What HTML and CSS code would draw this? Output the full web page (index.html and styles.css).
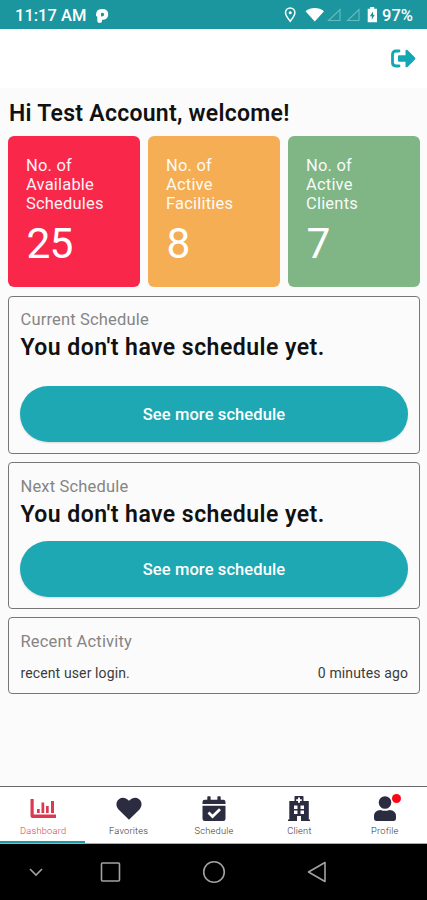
FILE: index.html
```html
<!DOCTYPE html>
<html lang="en">
<head>
<meta charset="utf-8">
<meta name="viewport" content="width=device-width, initial-scale=1">
<title>Dashboard</title>
<link rel="stylesheet" href="styles.css">
</head>
<body>
<div class="status">
  <span class="time">11:17 AM</span>
  <svg class="p-icon" width="14" height="16" viewBox="0 0 14 16"><path fill="#fff" fill-rule="evenodd" d="M4 1.500C9 0 13.200 1.800 13.200 6.300c0 4-3 5.700-6.200 5.500v1.400q0 1.800-2.300 1.800T2.300 13.200V8.500Q1 8.500 1 7C1.200 4 2 2.200 4 1.500zM6 5v3.500q3.200.3 3.200-2T6 5z"/></svg>
  <svg class="indicators" width="94" height="18" viewBox="0 0 94 18">
    <path fill="none" stroke="#fff" stroke-width="1.500" d="M6.200 14.200C3.500 10.800 1.500 8.500 1.500 5.700a4.700 4.700 0 0 1 9.400 0c0 2.800-2 5.100-4.700 8.500z"/>
    <circle cx="6.200" cy="5.800" r="1.500" fill="#fff"/>
    <path fill="#fff" d="M21.500 4.200c5-4.300 13.500-4.300 18.500 0L30.800 14.500z"/>
    <path fill="none" stroke="#65bcc0" stroke-width="1.100" d="M56 2.500v11H44.500zM75 2.500v11H63.500z"/>
    <path fill="#fff" fill-rule="evenodd" d="M86.200 0h4v1.700H93v13.500h-9.300V1.700h2.500zM89 4.500l-3.200 4.700h2v3.500l3-4.900H89z"/>
  </svg>
  <span class="percent">97%</span>
</div>
<header class="topbar">
  <svg width="26" height="20" viewBox="0 0 26 20"><path fill="none" stroke="#13a6b3" stroke-width="2.800" stroke-linecap="round" d="M9 2H6Q2.500 2 2.500 5.500v8Q2.500 17 6 17h3"/><path fill="#13a6b3" d="M9 6.300h6.500V1.600Q16 .1 17.500 1.100l7.500 7.400q.8 1 0 2l-7.500 7.400q-1.500 1-2-.5v-4.700H9q-1 0-1-1V7.300q0-1 1-1z"/></svg>
</header>
<main class="content">
  <h1>Hi Test Account, welcome!</h1>
  <section class="stats">
    <div class="stat red"><p>No. of<br>Available<br>Schedules</p><strong>25</strong></div>
    <div class="stat orange"><p>No. of<br>Active<br>Facilities</p><strong>8</strong></div>
    <div class="stat green"><p>No. of<br>Active<br>Clients</p><strong>7</strong></div>
  </section>
  <section class="panel current">
    <h2>Current Schedule</h2>
    <p class="message">You don't have schedule yet.</p>
    <button>See more schedule</button>
  </section>
  <section class="panel next">
    <h2>Next Schedule</h2>
    <p class="message">You don't have schedule yet.</p>
    <button>See more schedule</button>
  </section>
  <section class="panel recent">
    <h2>Recent Activity</h2>
    <div class="activity"><span class="event">recent user login.</span><span class="ago">0 minutes ago</span></div>
  </section>
</main>
<nav class="tabs">
  <a class="tab active">
    <svg width="28" height="26" viewBox="0 0 28 26"><path fill="#dc3850" d="M1.500 3h3.200v15.500H27V22H3.500q-2 0-2-2zM8 13h2.700v4H8zM12.500 6.500h2.700V17h-2.700zM17 10h2.700v7H17zM22 5h3v12h-3z"/></svg>
    <span>Dashboard</span>
  </a>
  <a class="tab">
    <svg width="28" height="26" viewBox="0 0 28 26"><path fill="#2b2c40" d="M14 23.800 3.500 13.400C.4 9.700 1 5.100 4.200 2.900c3-2 6.600-1.300 9.800 1.800 3.200-3.100 6.800-3.800 9.800-1.800 3.200 2.200 3.800 6.800.7 10.500z"/></svg>
    <span>Favorites</span>
  </a>
  <a class="tab">
    <svg width="28" height="26" viewBox="0 0 28 26"><path fill="#2b2c40" d="M2.500 8V6q0-2.300 2.300-2.300h2.500V1q0-.8.8-.8h1.700q.8 0 .8.800v2.700h6.800V1q0-.8.8-.8h1.700q.8 0 .8.800v2.700h2.500q2.300 0 2.300 2.300v2zM2.500 9.700h23v13q0 2.300-2.300 2.300H4.800q-2.300 0-2.300-2.300z"/><path fill="none" stroke="#fff" stroke-width="2.700" d="m8.500 16.500 4 4 7.500-7.300"/></svg>
    <span>Schedule</span>
  </a>
  <a class="tab">
    <svg width="28" height="26" viewBox="0 0 28 26"><path fill="#2b2c40" fill-rule="evenodd" d="M9.500.8q0-.8.800-.8h7.400q.8 0 .8.800V5h5.300v18.500H25V25H3v-1.500h1.300V5h5.200zM13 1.500v1.800h-1.800V5H13v1.800h2V5h1.800V3.300H15V1.500zM9 9.500v3.500h3.500v-3.500zm6.500 0v3.500H19v-3.500zM9 14.500V18h3.500v-3.500zm6.500 0V18H19v-3.500zM12 20v5h4v-5z"/></svg>
    <span>Client</span>
  </a>
  <a class="tab profile">
    <svg width="28" height="26" viewBox="0 0 28 26"><circle cx="14" cy="6.500" r="6.300" fill="#2b2c40"/><path fill="#2b2c40" d="M3 22v-1.500q0-6.500 6.700-6.500 4.300 1.700 8.600 0 6.700 0 6.700 6.500V22q0 3-2.500 3h-17Q3 25 3 22z"/></svg>
    <i class="badge"></i>
    <span>Profile</span>
  </a>
</nav>
<footer class="system">
  <svg width="427" height="56" viewBox="0 0 427 56" fill="none" stroke="#a2a2a2" stroke-width="1.600"><path d="m30 25 6 6 6-6"/><rect x="101.500" y="19" width="18" height="18" rx="1"/><circle cx="214" cy="28" r="10.300"/><path stroke-linejoin="round" d="M325 18.500v19L308.500 28z"/></svg>
</footer>
</body>
</html>
```

FILE: styles.css
```css
* { box-sizing: border-box; }
html, body { margin: 0; height: 900px; overflow: hidden; }
body {
  display: flex;
  flex-direction: column;
  width: 427px;
  background: #fbfbfb;
  font-family: Roboto, "Noto Sans", sans-serif;
  color: #111;
}
h1, h2, p { margin: 0; }
svg { display: block; flex: none; }
span, h1, h2, p { white-space: nowrap; }

.status {
  display: flex;
  align-items: center;
  height: 28.500px;
  padding: 3px 14px 0 15px;
  background: #1b959e;
  color: #fff;
  font-size: 16.500px;
  font-weight: 500;
}
.time { width: 72px; }
.p-icon { margin-left: 8px; }
.indicators { margin-left: auto; }
.percent { margin-left: 4.500px; width: 31px; }

.topbar {
  display: flex;
  justify-content: flex-end;
  height: 59.500px;
  padding: 20px 11px 0;
  background: #fff;
}

.content { flex: 1; padding: 10px 7px 0 8px; }
h1 {
  height: 37.500px;
  padding-left: 1px;
  font-size: 23px;
  line-height: 31px;
  font-weight: 600;
  letter-spacing: .27px;
}
.stats { display: grid; grid-template-columns: repeat(3, 1fr); gap: 8px; height: 151.500px; }
.stat { padding: 20px 18px 0; border-radius: 6px; color: #fff; }
.stat p { font-size: 16.500px; line-height: 19.300px; letter-spacing: .2px; opacity: .94; }
.stat strong { display: block; margin-top: 5.500px; padding-left: .5px; font-size: 42.500px; line-height: 50px; font-weight: 400; letter-spacing: -1px; }
.red { background: #f9284b; }
.orange { background: #f5ae53; }
.green { background: #80b586; }

.panel {
  margin-top: 8.500px;
  padding: 13.500px 11px 0;
  border: 1.500px solid #77777a;
  border-radius: 4px;
}
.current { height: 158px; }
.next { height: 146.500px; }
.recent { height: 77px; }
h2 { padding-left: .5px; font-size: 16.500px; line-height: 19px; font-weight: 400; color: #858585; letter-spacing: .17px; }
.message { margin-top: 4px; padding-left: .5px; font-size: 23px; line-height: 30px; font-weight: 600; letter-spacing: .46px; }
button {
  display: block;
  width: 100%;
  height: 56px;
  margin-top: 23px;
  padding: 0;
  border: 0;
  border-radius: 28px;
  background: #1ea8b3;
  color: #fff;
  font: 500 16.500px/57px Roboto, sans-serif;
  letter-spacing: .1px;
  box-shadow: 0 1px 2px #0002;
}
.next button { margin-top: 11px; }
.activity { display: flex; justify-content: space-between; margin-top: 13.500px; padding-left: .5px; font-size: 14px; line-height: 18px; color: #3b3b3b; letter-spacing: .12px; }

.tabs { display: flex; flex: none; height: 58px; border-top: 1.500px solid #69696b; border-bottom: 1px solid #aaa; background: #fff; }
.tab {
  position: relative;
  display: flex;
  flex: 1;
  flex-direction: column;
  align-items: center;
  padding: 9px 0 0 1px;
  font-size: 9.300px;
  line-height: 12px;
  font-weight: 300;
  color: #333;
}
.tab span { margin-top: 3px; letter-spacing: .2px; }
.active { color: #dc3850; box-shadow: inset 0 -2px #1e9ba3; }
.badge { position: absolute; top: 7px; left: 50px; width: 9px; height: 9px; border-radius: 50%; background: #fb0615; }
.system { flex: none; height: 56px; background: #000; }
```
